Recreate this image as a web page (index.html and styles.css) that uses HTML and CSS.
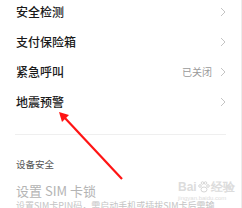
FILE: index.html
```html
<!DOCTYPE html>
<html>
<head>
<meta charset="utf-8">
<link rel="stylesheet" href="styles.css">
</head>
<body>
<div class="screen">
  <div class="list">
    <div class="row"><span class="label">安全检测</span><span class="right"><svg class="chev" width="6" height="10" viewBox="0 0 6 10"><path d="M1 1 L5 5 L1 9" fill="none" stroke="#c4c4c4" stroke-width="1"/></svg></span></div>
    <div class="row"><span class="label">支付保险箱</span><span class="right"><svg class="chev" width="6" height="10" viewBox="0 0 6 10"><path d="M1 1 L5 5 L1 9" fill="none" stroke="#c4c4c4" stroke-width="1"/></svg></span></div>
    <div class="row"><span class="label">紧急呼叫</span><span class="right"><span class="value">已关闭</span><svg class="chev" width="6" height="10" viewBox="0 0 6 10"><path d="M1 1 L5 5 L1 9" fill="none" stroke="#c4c4c4" stroke-width="1"/></svg></span></div>
    <div class="row"><span class="label">地震预警</span><span class="right"><svg class="chev" width="6" height="10" viewBox="0 0 6 10"><path d="M1 1 L5 5 L1 9" fill="none" stroke="#c4c4c4" stroke-width="1"/></svg></span></div>
  </div>
  <div class="divider"></div>
  <div class="section">设备安全</div>
  <div class="item">
    <div class="item-title">设置 SIM 卡锁</div>
    <div class="item-sub">设置SIM卡PIN码，需启动手机或插拔SIM卡后需输</div>
  </div>
  <div class="watermark">
    <div class="wm-logo">Bai<svg class="paw" width="12" height="12" viewBox="0 0 12 12"><g fill="none" stroke="#d6d6d6" stroke-width="1"><ellipse cx="6" cy="8.5" rx="3" ry="2.5"/><circle cx="2" cy="5" r="1.3"/><circle cx="4.5" cy="2" r="1.3"/><circle cx="7.5" cy="2" r="1.3"/><circle cx="10" cy="5" r="1.3"/></g></svg>经验</div>
    <div class="wm-url">jingyan.baidu.com</div>
  </div>
  <svg class="arrow" width="242" height="208" viewBox="0 0 242 208">
    <line x1="122" y1="179" x2="64" y2="117" stroke="#ff1414" stroke-width="2.2"/>
    <polygon points="59,112 69,115 62,122" fill="#ff1414"/>
  </svg>
</div>
</body>
</html>
```

FILE: styles.css
```css
html, body {
  margin: 0;
  padding: 0;
  background: #fff;
}
body {
  width: 242px;
  height: 208px;
  overflow: hidden;
  font-family: "Noto Sans CJK SC", "Noto Sans", sans-serif;
}
.screen {
  position: relative;
  width: 241px;
  height: 208px;
  border-right: 1px solid #ececec;
  overflow: hidden;
}
.list {
  margin-top: -3px;
}
.row {
  height: 30px;
  display: flex;
  align-items: center;
  justify-content: space-between;
  padding: 0 15px 0 16px;
}
.label {
  font-size: 12px;
  font-weight: 500;
  color: #1a1a1a;
  line-height: 1;
}
.right {
  display: flex;
  align-items: center;
  gap: 8px;
}
.value {
  font-size: 10px;
  color: #9a9a9a;
  line-height: 1;
}
.chev {
  display: block;
}
.divider {
  margin: 17px 15px 0 15px;
  height: 1px;
  background: #efefef;
}
.section {
  margin-top: 23px;
  padding-left: 16px;
  font-size: 9.5px;
  color: #555;
  line-height: 12px;
}
.item {
  padding-left: 16px;
  margin-top: 13px;
}
.item-title {
  font-size: 13px;
  color: #b4b4b4;
  line-height: 16px;
}
.item-sub {
  font-size: 9px;
  color: #c4c4c4;
  line-height: 10px;
  margin-top: 2px;
  white-space: nowrap;
}
.watermark {
  position: absolute;
  left: 178px;
  top: 180px;
  color: #dcdcdc;
}
.wm-logo {
  display: flex;
  align-items: center;
  font-family: "Liberation Sans", sans-serif;
  font-size: 12px;
  font-weight: bold;
  line-height: 14px;
}
.paw {
  display: block;
  margin: 0 1px;
}
.wm-url {
  font-family: "Liberation Sans", sans-serif;
  font-size: 6px;
  line-height: 8px;
}
.arrow {
  position: absolute;
  left: 0;
  top: 0;
}
```
